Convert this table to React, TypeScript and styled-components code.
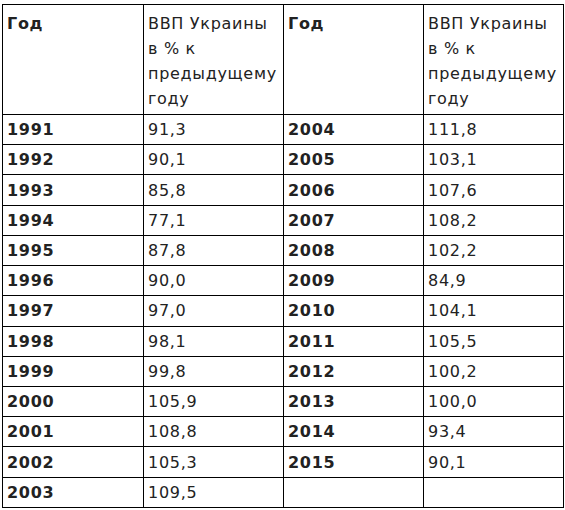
import styled, {createGlobalStyle} from "styled-components";

const GlobalStyle = createGlobalStyle`
    html, body {
        margin: 0;
        padding: 0;
        background: #ffffff;
    }
`

const PageWrapper = styled.div`
    padding: 4px 0 0 2px;
    font-family: "DejaVu Sans", Verdana, sans-serif;
    font-size: 16px;
    letter-spacing: 0.7px;
    color: #222222;
`

const GdpTable = styled.table`
    border-collapse: collapse;
    table-layout: fixed;
    width: 562px;
`

const HeaderRow = styled.tr`
    height: 110px;
`

const DataRow = styled.tr`
    height: 30.23px;
`

const Cell = styled.td<{ $bold?: boolean; $top?: boolean }>`
    border: 1px solid #000000;
    padding: 0 4px;
    line-height: 25px;
    vertical-align: ${props => (props.$top ? "top" : "middle")};
    font-weight: ${props => (props.$bold ? "bold" : "normal")};
    padding-top: ${props => (props.$top ? "6px" : "0")};
`

const leftRows: [string, string][] = [
    ["1991", "91,3"],
    ["1992", "90,1"],
    ["1993", "85,8"],
    ["1994", "77,1"],
    ["1995", "87,8"],
    ["1996", "90,0"],
    ["1997", "97,0"],
    ["1998", "98,1"],
    ["1999", "99,8"],
    ["2000", "105,9"],
    ["2001", "108,8"],
    ["2002", "105,3"],
    ["2003", "109,5"],
]

const rightRows: [string, string][] = [
    ["2004", "111,8"],
    ["2005", "103,1"],
    ["2006", "107,6"],
    ["2007", "108,2"],
    ["2008", "102,2"],
    ["2009", "84,9"],
    ["2010", "104,1"],
    ["2011", "105,5"],
    ["2012", "100,2"],
    ["2013", "100,0"],
    ["2014", "93,4"],
    ["2015", "90,1"],
    ["", ""],
]

function App() {
    return (
        <>
            <GlobalStyle/>
            <PageWrapper>
                <GdpTable>
                    <colgroup>
                        <col style={{width: 141}}/>
                        <col style={{width: 140}}/>
                        <col style={{width: 140}}/>
                        <col style={{width: 140}}/>
                    </colgroup>
                    <tbody>
                        <HeaderRow>
                            <Cell $bold $top>Год</Cell>
                            <Cell $top>ВВП Украины в % к предыдущему году</Cell>
                            <Cell $bold $top>Год</Cell>
                            <Cell $top>ВВП Украины в % к предыдущему году</Cell>
                        </HeaderRow>
                        {leftRows.map((row, i) => (
                            <DataRow key={row[0]}>
                                <Cell $bold>{row[0]}</Cell>
                                <Cell>{row[1]}</Cell>
                                <Cell $bold>{rightRows[i][0]}</Cell>
                                <Cell>{rightRows[i][1]}</Cell>
                            </DataRow>
                        ))}
                    </tbody>
                </GdpTable>
            </PageWrapper>
        </>
    )
}

export default App;
